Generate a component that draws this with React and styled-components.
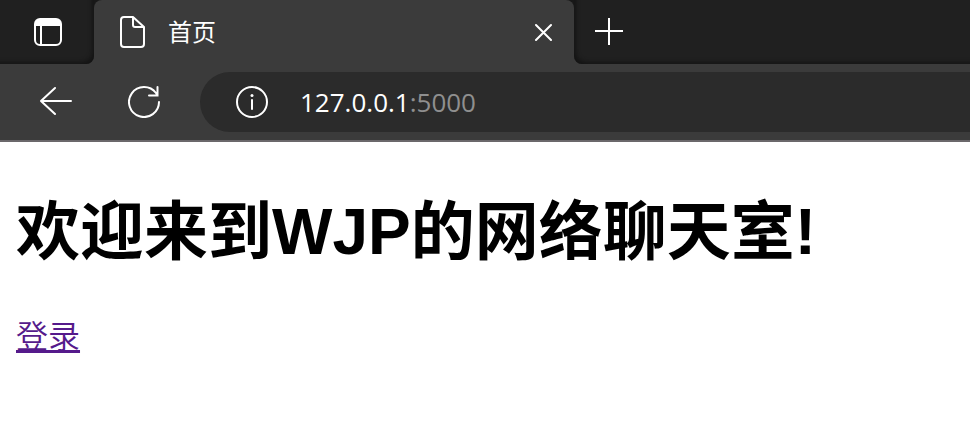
import React from 'react';
import styled, { createGlobalStyle } from 'styled-components';

const Global = createGlobalStyle`
  *, *::before, *::after { box-sizing: border-box; }
  body { margin: 0; background: #fff; color: #000; font-family: "Open Sans", "Noto Sans CJK SC", sans-serif; }
`;
const TabStrip = styled.div`
  display: flex;
  height: 64px;
  background: #3b3b3b;
`;
const StripStart = styled.div`
  display: flex;
  flex: none;
  background: #202020;
  border-bottom-right-radius: 8px;
  box-shadow: inset -4px -4px 4px -2px #141414;
`;
const StripEnd = styled.div`
  display: flex;
  flex: 1 0 68px;
  background: #202020;
  border-bottom-left-radius: 8px;
  box-shadow: inset 4px -4px 4px -2px #141414;
`;
const IconButton = styled.button`
  display: flex;
  align-items: center;
  justify-content: center;
  flex: none;
  width: ${(p) => p.$width}px;
  padding: 0;
  border: 0;
  background: transparent;
  color: #fff;
`;
const TabSlot = styled.div`
  display: flex;
  flex: 0 1 480px;
  min-width: 0;
  background: linear-gradient(#181818 50%, #3b3b3b 50%);
`;
const Tab = styled.div`
  display: flex;
  align-items: center;
  flex: 1;
  min-width: 0;
  padding-left: 25px;
  background: #3b3b3b;
  border-radius: 8px 8px 0 0;
  color: #fff;
`;
const TabTitle = styled.span`
  flex: 1;
  padding-left: 23px;
  font-size: 24px;
  line-height: 32px;
`;
const Toolbar = styled.div`
  display: flex;
  align-items: center;
  height: 78px;
  padding-left: 12px;
  background: #3b3b3b;
  border-bottom: 2px solid #6b686b;
`;
const AddressBar = styled.div`
  display: flex;
  align-items: center;
  flex: 1;
  height: 60px;
  margin-left: 12px;
  background: #2b2b2b;
  border-radius: 30px 0 0 30px;
`;
const Address = styled.div`
  font-size: 26px;
  line-height: 36px;
  color: #fff;
`;
const Port = styled.span`
  color: #8f8f8f;
`;
const Page = styled.main`
  padding: 44px 16px;
`;
const Heading = styled.h1`
  margin: 0 0 36px;
  font-family: "Liberation Sans", "Noto Sans CJK SC", sans-serif;
  font-size: 64px;
  line-height: 92px;
`;
const Link = styled.a`
  font-family: "Noto Sans CJK SC", sans-serif;
  font-size: 32px;
  font-weight: 350;
  line-height: 40px;
  color: #551a8b;
`;

const Icon = ({ width, height = width, children }) => (
  <svg width={width} height={height} viewBox={`0 0 ${width} ${height}`} fill="none" stroke="currentColor" strokeWidth="2" strokeLinecap="round" strokeLinejoin="round" aria-hidden="true">
    {children}
  </svg>
);

export default function App() {
  return (
    <>
      <Global />
      <header>
        <TabStrip>
          <StripStart>
            <IconButton $width={94} aria-label="Tab actions">
              <Icon width={30} height={28}>
                <rect x="3" y="1" width="26" height="26" rx="5" />
                <path d="M3 8V6a5 5 0 0 1 5-5h16a5 5 0 0 1 5 5v2z" fill="currentColor" stroke="none" />
                <path d="M9 8v19" />
              </Icon>
            </IconButton>
          </StripStart>
          <TabSlot>
            <Tab>
              <Icon width={26} height={32}><path d="M14 1H5a3 3 0 0 0-3 3v24a3 3 0 0 0 3 3h17a3 3 0 0 0 3-3V11zM14 1v8a2 2 0 0 0 2 2h9" /></Icon>
              <TabTitle>首页</TabTitle>
              <IconButton $width={62} aria-label="Close tab">
                <Icon width={18}><path d="M2 2l15 15M17 2L2 17" /></Icon>
              </IconButton>
            </Tab>
          </TabSlot>
          <StripEnd>
            <IconButton $width={70} aria-label="New tab">
              <Icon width={28}><path d="M14 0v27M0 13h28" strokeLinecap="butt" /></Icon>
            </IconButton>
          </StripEnd>
        </TabStrip>
        <Toolbar>
          <IconButton $width={88} aria-label="Back">
            <Icon width={32}><path d="M31 15H1M15 2L1 15l14 13" /></Icon>
          </IconButton>
          <IconButton $width={88} aria-label="Refresh">
            <Icon width={32}><path d="M31 16a15 15 0 1 1-3-9l1.500 2.500M29.500 1v8.500H21" strokeLinejoin="miter" /></Icon>
          </IconButton>
          <AddressBar>
            <IconButton $width={100} aria-label="Site information">
              <Icon width={36} height={32}><circle cx="20" cy="16" r="15" /><path d="M20 14v9" /><circle cx="20" cy="9.500" r="1.500" fill="currentColor" stroke="none" /></Icon>
            </IconButton>
            <Address>127.0.0.1<Port>:5000</Port></Address>
          </AddressBar>
        </Toolbar>
      </header>
      <Page>
        <Heading>欢迎来到WJP的网络聊天室!</Heading>
        <Link href="#login">登录</Link>
      </Page>
    </>
  );
}
